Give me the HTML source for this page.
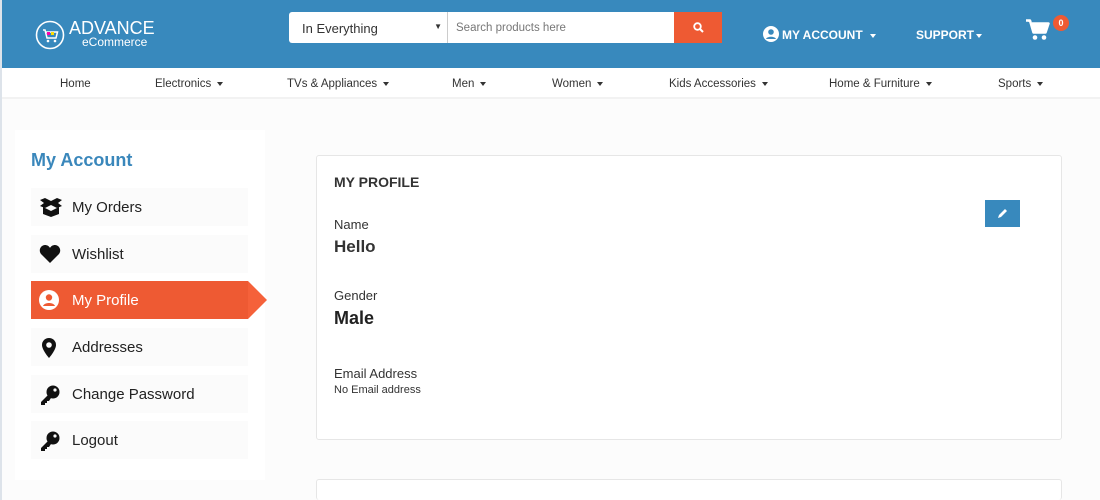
<!DOCTYPE html>
<html style="width:1100px;height:500px;overflow:hidden"><head><meta charset="utf-8"><style>
*{box-sizing:border-box;margin:0;padding:0}
body{width:1100px;height:500px;overflow:hidden;background:#fcfcfc;font-family:"Liberation Sans","DejaVu Sans",sans-serif;color:#222;position:relative}
.lb{position:absolute;left:0;top:0;width:2px;height:500px;background:#dde3ea;z-index:5}
.hdr{position:absolute;left:0;top:0;width:1100px;height:68px;background:#3889bd}
.nav{position:absolute;left:0;top:68px;width:1100px;height:31px;background:#fff;border-bottom:2px solid #f2f2f2;font-size:11.5px;color:#333}
.nav span{position:absolute;top:10px}
.car{display:inline-block;border-left:3.5px solid transparent;border-right:3.5px solid transparent;border-top:4px solid #333;vertical-align:middle;margin-left:6px}
.side{position:absolute;left:15px;top:130px;width:250px;height:350px;background:#fff}
.item{position:absolute;left:16px;width:217px;height:38px;background:#fbfbfb;font-size:15px;color:#222}
.item span{position:absolute;left:41px;top:11px}
.item svg{position:absolute;left:8px;top:9px}
.card{position:absolute;left:316px;width:746px;background:#fff;border:1px solid #e6e6e6;border-radius:3px}
</style></head><body>
<div class="lb"></div>
<div class="hdr">
 <svg style="position:absolute;left:35px;top:20px" width="30" height="30" viewBox="0 0 30 30"><circle cx="15" cy="15" r="13.5" fill="none" stroke="#fff" stroke-width="1.6"/><path d="M8 10h2l2 8h9l1.5-6H11" fill="none" stroke="#fff" stroke-width="1.5"/><rect x="12" y="12" width="3" height="3" fill="#f0a"/><rect x="16" y="12" width="3" height="3" fill="#fd0"/><circle cx="13" cy="21" r="1.3" fill="#fff"/><circle cx="20" cy="21" r="1.3" fill="#fff"/></svg>
 <div style="position:absolute;left:69px;top:19px;color:#fff;font-size:18px;line-height:18px">ADVANCE</div>
 <div style="position:absolute;left:82px;top:36px;color:#fff;font-size:12px;line-height:12px">eCommerce</div>
 <div style="position:absolute;left:289px;top:12px;width:159px;height:31px;background:#fff;border-radius:3px 0 0 3px;border-right:1px solid #ccc;font-size:13px;color:#333;padding:9px 0 0 13px">In Everything<span style="position:absolute;right:5px;top:10px;font-size:8px">▼</span></div>
 <div style="position:absolute;left:448px;top:12px;width:226px;height:31px;background:#fff;font-size:11.5px;color:#777;padding:10px 0 0 8px">Search products here</div>
 <div style="position:absolute;left:674px;top:12px;width:48px;height:31px;background:#ee5a33"><svg style="position:absolute;left:19px;top:10px" width="11" height="11" viewBox="0 0 11 11"><circle cx="4.5" cy="4.5" r="3.3" fill="none" stroke="#fff" stroke-width="1.8"/><path d="M7 7l3 3" stroke="#fff" stroke-width="2"/></svg></div>
 <svg style="position:absolute;left:763px;top:26px" width="16" height="16" viewBox="0 0 16 16"><circle cx="8" cy="8" r="8" fill="#fff"/><circle cx="8" cy="6" r="2.8" fill="#3889bd"/><path d="M3 13c1-3 9-3 10 0" fill="#3889bd"/></svg>
 <div style="position:absolute;left:782px;top:28px;color:#fff;font-weight:bold;font-size:12px">MY ACCOUNT <span class="car" style="border-top-color:#fff;margin-left:4px"></span></div>
 <div style="position:absolute;left:916px;top:28px;color:#fff;font-weight:bold;font-size:12px">SUPPORT<span class="car" style="border-top-color:#fff;margin-left:2px"></span></div>
 <svg style="position:absolute;left:1026px;top:19px" width="24" height="22" viewBox="0 0 24 22"><path d="M0 1.5h4l3.5 12h12l3-9H6" fill="#fff" stroke="#fff" stroke-width="2.5" stroke-linejoin="round"/><circle cx="9" cy="18.5" r="2.3" fill="#fff"/><circle cx="18" cy="18.5" r="2.3" fill="#fff"/></svg>
 <div style="position:absolute;left:1053px;top:15px;width:16px;height:16px;border-radius:50%;background:#ee5a33;color:#fff;font-size:9px;font-weight:bold;text-align:center;line-height:16px">0</div>
</div>
<div class="nav">
 <span style="left:60px">Home</span>
 <span style="left:155px">Electronics<i class="car"></i></span>
 <span style="left:287px">TVs &amp; Appliances<i class="car"></i></span>
 <span style="left:452px">Men<i class="car"></i></span>
 <span style="left:552px">Women<i class="car"></i></span>
 <span style="left:669px">Kids Accessories<i class="car"></i></span>
 <span style="left:829px">Home &amp; Furniture<i class="car"></i></span>
 <span style="left:998px">Sports<i class="car"></i></span>
</div>
<div class="side">
 <div style="position:absolute;left:16px;top:20px;font-size:18px;font-weight:bold;color:#3a87bb">My Account</div>
 <div class="item" style="top:58px"><svg width="24" height="20" viewBox="0 0 24 20"><path d="M1 3l5-2 6 3 6-3 5 2-4 3 4 3-5 2-6-3-6 3-5-2 4-3z" fill="#111"/><path d="M4 10v7l8 3 8-3v-7l-8 4z" fill="#111"/></svg><span>My Orders</span></div>
 <div class="item" style="top:105px"><svg width="22" height="20" viewBox="0 0 22 20"><path d="M11 19L2 10C-1 6 2 1 6 1c2 0 4 1 5 3 1-2 3-3 5-3 4 0 7 5 4 9z" fill="#111"/></svg><span>Wishlist</span></div>
 <div class="item" style="top:151px;background:#ee5a33;color:#fff"><svg width="20" height="20" viewBox="0 0 20 20"><circle cx="10" cy="10" r="10" fill="#fff"/><circle cx="10" cy="7.5" r="3.2" fill="#ee5a33"/><path d="M4 16c1.5-4 10.5-4 12 0" fill="#ee5a33"/></svg><span>My Profile</span></div>
 <div style="position:absolute;left:233px;top:151px;width:0;height:0;border-top:19px solid transparent;border-bottom:19px solid transparent;border-left:19px solid #f5613a"></div>
 <div class="item" style="top:198px"><svg width="20" height="22" viewBox="0 0 20 22"><path d="M10 1a7 7 0 0 0-7 7c0 5 7 13 7 13s7-8 7-13a7 7 0 0 0-7-7z" fill="#111"/><circle cx="10" cy="8" r="2.8" fill="#fbfbfb"/></svg><span>Addresses</span></div>
 <div class="item" style="top:245px"><svg width="22" height="22" viewBox="0 0 22 22"><circle cx="14" cy="8" r="6.5" fill="#111"/><circle cx="16" cy="6" r="1.6" fill="#fbfbfb"/><path d="M9 11L2 18v3h4v-2h2v-2h2l2-3z" fill="#111"/></svg><span>Change Password</span></div>
 <div class="item" style="top:291px"><svg width="22" height="22" viewBox="0 0 22 22"><circle cx="14" cy="8" r="6.5" fill="#111"/><circle cx="16" cy="6" r="1.6" fill="#fbfbfb"/><path d="M9 11L2 18v3h4v-2h2v-2h2l2-3z" fill="#111"/></svg><span>Logout</span></div>
</div>
<div class="card" style="top:155px;height:285px">
 <div style="position:absolute;left:17px;top:18px;font-size:14px;font-weight:bold;color:#333">MY PROFILE</div>
 <div style="position:absolute;left:668px;top:44px;width:35px;height:27px;background:#3889bd"><svg style="position:absolute;left:12px;top:8px" width="11" height="11" viewBox="0 0 11 11"><path d="M1 10l1-3 6-6 2 2-6 6z" fill="#fff"/></svg></div>
 <div style="position:absolute;left:17px;top:61px;font-size:13px;color:#333">Name</div>
 <div style="position:absolute;left:17px;top:81px;font-size:17px;font-weight:bold;color:#333">Hello</div>
 <div style="position:absolute;left:17px;top:132px;font-size:13px;color:#333">Gender</div>
 <div style="position:absolute;left:17px;top:152px;font-size:18px;font-weight:bold;color:#222">Male</div>
 <div style="position:absolute;left:17px;top:210px;font-size:13px;color:#333">Email Address</div>
 <div style="position:absolute;left:17px;top:228px;font-size:11px;color:#333">No Email address</div>
</div>
<div class="card" style="top:479px;height:21px;border-bottom:none"></div>
</body></html>
